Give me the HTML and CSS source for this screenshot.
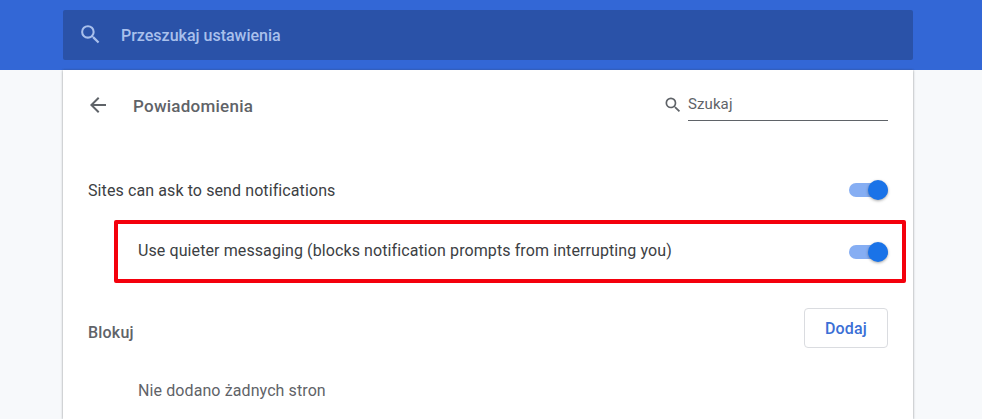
FILE: index.html
```html
<!DOCTYPE html>
<html>
    <head>
        <title>Powiadomienia</title>
        <meta charset="utf-8">
        <link rel="stylesheet" href="styles.css">
    </head>
    <body>
        <div class="top_bar">
            <div class="top_search">
                <svg class="top_search_icon" viewBox="0 0 24 24" width="25" height="25"><path d="M15.5 14h-.79l-.28-.27A6.47 6.47 0 0 0 16 9.5 6.5 6.5 0 1 0 9.5 16c1.61 0 3.09-.59 4.23-1.57l.27.28v.79l5 4.99L20.49 19l-4.99-5zm-6 0C7.01 14 5 11.99 5 9.5S7.01 5 9.5 5 14 7.01 14 9.5 11.99 14 9.5 14z"/></svg>
                <span class="top_search_text">Przeszukaj ustawienia</span>
            </div>
        </div>
        <div class="card">
            <div class="sub_header">
                <svg class="back_icon" viewBox="0 0 24 24" width="24" height="24"><path d="M20 11H7.83l5.59-5.59L12 4l-8 8 8 8 1.41-1.41L7.83 13H20v-2z"/></svg>
                <span class="sub_title">Powiadomienia</span>
                <div class="sub_search">
                    <svg class="sub_search_icon" viewBox="0 0 24 24" width="20" height="20"><path d="M15.5 14h-.79l-.28-.27A6.47 6.47 0 0 0 16 9.5 6.5 6.5 0 1 0 9.5 16c1.61 0 3.09-.59 4.23-1.57l.27.28v.79l5 4.99L20.49 19l-4.99-5zm-6 0C7.01 14 5 11.99 5 9.5S7.01 5 9.5 5 14 7.01 14 9.5 11.99 14 9.5 14z"/></svg>
                    <span class="sub_search_text">Szukaj</span>
                </div>
            </div>
            <div class="row_main">
                <span>Sites can ask to send notifications</span>
                <span class="toggle"><span class="toggle_knob"></span></span>
            </div>
            <div class="row_marked">
                <span class="marked_text">Use quieter messaging (blocks notification prompts from interrupting you)</span>
                <span class="toggle"><span class="toggle_knob"></span></span>
            </div>
            <div class="row_block">
                <span class="block_title">Blokuj</span>
                <button class="add_button">Dodaj</button>
            </div>
            <div class="row_empty">Nie dodano żadnych stron</div>
        </div>
    </body>
</html>
```

FILE: styles.css
```css
html, body {
    height: 419px;
    overflow: hidden;
}

body {
    margin: 0;
    padding: 0;
    background: #f7f9fb;
    font-family: Roboto, "Liberation Sans", sans-serif;
    font-size: 16px;
    letter-spacing: 0.1px;
    color: #3c4043;
}

.top_bar {
    height: 70px;
    box-sizing: border-box;
    padding: 10px 69px 10px 63px;
    background: #3367d6;
}

.top_search {
    display: flex;
    align-items: center;
    height: 50px;
    padding-left: 15px;
    border-radius: 2px;
    background: #2a52a8;
}

.top_search_icon {
    margin-bottom: 2px;
    fill: #a9c0ec;
}

.top_search_text {
    margin-left: 18px;
    font-weight: 500;
    letter-spacing: 0;
    color: #a9c0ec;
}

.card {
    width: 850px;
    height: 349px;
    margin-left: 63px;
    background: #fff;
    box-shadow: 0 0 2px rgba(60, 64, 67, 0.4), 0 1px 3px rgba(60, 64, 67, 0.2);
}

.sub_header {
    display: flex;
    align-items: center;
    height: 70px;
    padding: 0 25px 0 23px;
}

.back_icon {
    fill: #5f6368;
}

.sub_title {
    margin-left: 23px;
    padding-top: 2px;
    font-size: 17px;
    font-weight: 500;
    letter-spacing: 0.25px;
    color: #5f6368;
}

.sub_search {
    display: flex;
    align-items: center;
    margin-left: auto;
}

.sub_search_icon {
    fill: #5f6368;
    margin-right: 5px;
}

.sub_search_text {
    display: block;
    width: 200px;
    height: 32px;
    line-height: 31px;
    box-sizing: border-box;
    border-bottom: 1px solid #5f6368;
    font-size: 15px;
    color: #5f6368;
}

.row_main {
    display: flex;
    align-items: center;
    justify-content: space-between;
    height: 40px;
    margin-top: 30px;
    padding: 0 25px;
}

.row_marked {
    display: flex;
    align-items: center;
    justify-content: space-between;
    height: 63px;
    box-sizing: border-box;
    margin: 10px 7px 0 51px;
    padding: 0 14px 0 20px;
    border: 4px solid #f4000c;
    border-radius: 2px;
}

.marked_text {
    margin-bottom: 2px;
}

.toggle {
    position: relative;
    display: block;
    width: 39px;
    height: 14px;
    border-radius: 7px;
    background: #86aef3;
}

.toggle_knob {
    position: absolute;
    top: -3px;
    right: 0;
    width: 20px;
    height: 20px;
    border-radius: 50%;
    background: #1a73e8;
    box-shadow: 0 1px 3px rgba(0, 0, 0, 0.35);
}

.row_block {
    display: flex;
    align-items: center;
    justify-content: space-between;
    height: 40px;
    margin-top: 25px;
    padding: 0 25px;
}

.block_title {
    padding-top: 8px;
    font-weight: 500;
    letter-spacing: 0.2px;
    color: #5f6368;
}

.add_button {
    width: 84px;
    height: 40px;
    padding: 0;
    border: 1px solid #dadce0;
    border-radius: 4px;
    background: #fff;
    font-family: inherit;
    font-size: 16px;
    font-weight: 500;
    letter-spacing: 0.2px;
    color: #3b6fd6;
}

.row_empty {
    margin-top: 33px;
    padding-left: 75px;
    line-height: 20px;
    color: #5f6368;
}
```
